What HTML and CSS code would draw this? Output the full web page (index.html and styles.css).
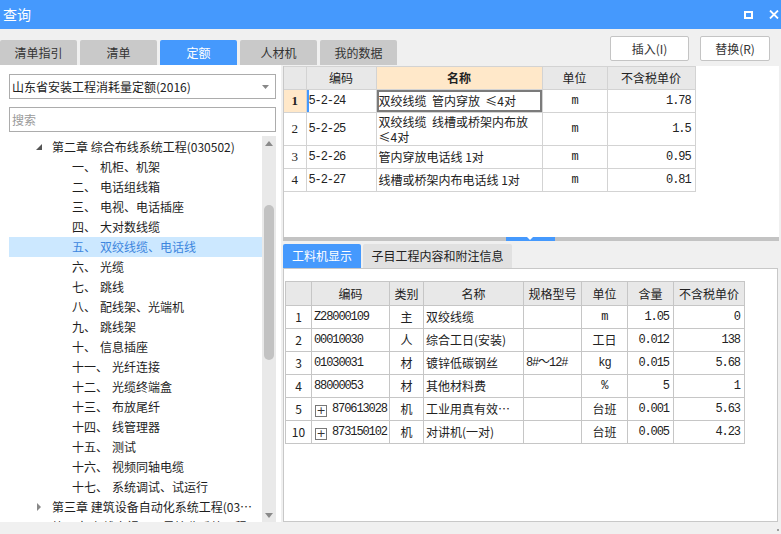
FILE: index.html
```html
<!DOCTYPE html>
<html lang="zh-CN">
<head>
<meta charset="utf-8">
<title>查询</title>
<link rel="stylesheet" href="styles.css">
</head>
<body>
<div class="titlebar">
  <span class="title">查询</span>
  <div class="win-btns">
    <svg width="9" height="8" viewBox="0 0 9 8"><rect x="1" y="1" width="7" height="6" fill="none" stroke="#fff" stroke-width="2"/></svg>
    <svg width="10" height="9" viewBox="0 0 10 9"><path d="M1 0.5 L9 8.5 M9 0.5 L1 8.5" stroke="#fff" stroke-width="1.8"/></svg>
  </div>
</div>

<div class="toolbar">
  <div class="tabs">
    <div class="tab">清单指引</div>
    <div class="tab">清单</div>
    <div class="tab active">定额</div>
    <div class="tab">人材机</div>
    <div class="tab">我的数据</div>
  </div>
  <div class="actions">
    <button class="btn btn-insert">插入(I)</button>
    <button class="btn btn-replace">替换(R)</button>
  </div>
</div>

<div class="main">
  <div class="left">
    <div class="combo">
      <span class="combo-text">山东省安装工程消耗量定额(2016)</span>
      <svg class="combo-arrow" width="7" height="4" viewBox="0 0 7 4"><path d="M0 0 L7 0 L3.5 4 Z" fill="#888"/></svg>
    </div>
    <div class="search">搜索</div>
    <div class="tree">
      <div class="tree-list">
        <div class="node lvl1"><svg class="tri" width="6" height="6" viewBox="0 0 6 6"><path d="M6 0 L6 6 L0 6 Z" fill="#555"/></svg><span class="label">第二章 综合布线系统工程(030502)</span></div>
        <div class="node lvl2"><span class="num">一、</span>机柜、机架</div>
        <div class="node lvl2"><span class="num">二、</span>电话组线箱</div>
        <div class="node lvl2"><span class="num">三、</span>电视、电话插座</div>
        <div class="node lvl2"><span class="num">四、</span>大对数线缆</div>
        <div class="node lvl2 selected"><span class="num">五、</span>双绞线缆、电话线</div>
        <div class="node lvl2"><span class="num">六、</span>光缆</div>
        <div class="node lvl2"><span class="num">七、</span>跳线</div>
        <div class="node lvl2"><span class="num">八、</span>配线架、光端机</div>
        <div class="node lvl2"><span class="num">九、</span>跳线架</div>
        <div class="node lvl2"><span class="num">十、</span>信息插座</div>
        <div class="node lvl2"><span class="num">十一、</span>光纤连接</div>
        <div class="node lvl2"><span class="num">十二、</span>光缆终端盒</div>
        <div class="node lvl2"><span class="num">十三、</span>布放尾纤</div>
        <div class="node lvl2"><span class="num">十四、</span>线管理器</div>
        <div class="node lvl2"><span class="num">十五、</span>测试</div>
        <div class="node lvl2"><span class="num">十六、</span>视频同轴电缆</div>
        <div class="node lvl2"><span class="num">十七、</span>系统调试、试运行</div>
        <div class="node lvl1"><svg class="tri" width="6" height="8" viewBox="0 0 6 8"><path d="M1 0 L5 4 L1 8 Z" fill="#888"/></svg><span class="label">第三章 建筑设备自动化系统工程(030503)</span></div>
        <div class="node lvl1"><svg class="tri" width="6" height="8" viewBox="0 0 6 8"><path d="M1 0 L5 4 L1 8 Z" fill="#888"/></svg><span class="label">第四章 有线电视、卫星接收系统工程</span></div>
      </div>
      <div class="vscroll">
        <div class="sb-btn"><svg width="8" height="5" viewBox="0 0 8 5"><path d="M0 5 L8 5 L4 0 Z" fill="#8a8a8a"/></svg></div>
        <div class="sb-thumb"></div>
        <div class="sb-fill"></div>
        <div class="sb-btn"><svg width="8" height="5" viewBox="0 0 8 5"><path d="M0 0 L8 0 L4 5 Z" fill="#8a8a8a"/></svg></div>
      </div>
    </div>
  </div>

  <div class="right">
    <div class="top-grid">
      <table class="grid grid-top">
        <colgroup><col style="width:22px"><col style="width:70px"><col style="width:166px"><col style="width:65px"><col style="width:88px"></colgroup>
        <tr class="hdr"><th class="rn"></th><th>编码</th><th class="sel-col">名称</th><th>单位</th><th>不含税单价</th></tr>
        <tr><td class="rn cur">1</td><td class="mono code cur-row">5-2-24</td><td class="name sel-cell">双绞线缆&nbsp; 管内穿放&nbsp; ≤4对</td><td class="mono ctr">m</td><td class="mono num">1.78</td></tr>
        <tr class="tall"><td class="rn">2</td><td class="mono code">5-2-25</td><td class="name wrap">双绞线缆&nbsp; 线槽或桥架内布放<br>≤4对</td><td class="mono ctr">m</td><td class="mono num">1.5</td></tr>
        <tr><td class="rn">3</td><td class="mono code">5-2-26</td><td class="name">管内穿放电话线 1对</td><td class="mono ctr">m</td><td class="mono num">0.95</td></tr>
        <tr><td class="rn">4</td><td class="mono code">5-2-27</td><td class="name">线槽或桥架内布电话线 1对</td><td class="mono ctr">m</td><td class="mono num">0.81</td></tr>
      </table>
    </div>
    <div class="splitter"><div class="split-handle"></div></div>
    <div class="btabs">
      <div class="btab active">工料机显示</div>
      <div class="btab">子目工程内容和附注信息</div>
    </div>
    <div class="bbox">
      <table class="grid grid-bottom">
        <colgroup><col style="width:26px"><col style="width:77px"><col style="width:34px"><col style="width:100px"><col style="width:58px"><col style="width:46px"><col style="width:46px"><col style="width:71px"></colgroup>
        <tr class="hdr"><th></th><th>编码</th><th>类别</th><th>名称</th><th>规格型号</th><th>单位</th><th>含量</th><th>不含税单价</th></tr>
        <tr><td class="ctr">1</td><td class="mono code">Z28000109</td><td class="ctr">主</td><td class="name">双绞线缆</td><td></td><td class="mono ctr">m</td><td class="mono num">1.05</td><td class="mono num">0</td></tr>
        <tr><td class="ctr">2</td><td class="mono code">00010030</td><td class="ctr">人</td><td class="name">综合工日(安装)</td><td></td><td class="ctr">工日</td><td class="mono num">0.012</td><td class="mono num">138</td></tr>
        <tr><td class="ctr">3</td><td class="mono code">01030031</td><td class="ctr">材</td><td class="name">镀锌低碳钢丝</td><td class="mono code">8#～12#</td><td class="mono ctr">kg</td><td class="mono num">0.015</td><td class="mono num">5.68</td></tr>
        <tr><td class="ctr">4</td><td class="mono code">88000053</td><td class="ctr">材</td><td class="name">其他材料费</td><td></td><td class="mono ctr">%</td><td class="mono num">5</td><td class="mono num">1</td></tr>
        <tr><td class="ctr">5</td><td class="mono code"><span class="plus">+</span>870613028</td><td class="ctr">机</td><td class="name"><span class="clip">工业用真有效值万用表</span></td><td></td><td class="ctr">台班</td><td class="mono num">0.001</td><td class="mono num">5.63</td></tr>
        <tr><td class="ctr">10</td><td class="mono code"><span class="plus">+</span>873150102</td><td class="ctr">机</td><td class="name">对讲机(一对)</td><td></td><td class="ctr">台班</td><td class="mono num">0.005</td><td class="mono num">4.23</td></tr>
      </table>
    </div>
  </div>
</div>
<div class="grip"></div>
</body>
</html>
```

FILE: styles.css
```css
* { box-sizing: border-box; }
html, body { margin: 0; padding: 0; }
body {
  width: 781px;
  height: 534px;
  overflow: hidden;
  background: #f0f0f0;
  font-family: "Noto Sans CJK SC", "Microsoft YaHei", sans-serif;
  font-size: 12px;
  color: #222;
  position: relative;
}

/* title bar */
.titlebar {
  height: 29px;
  background: #4599fd;
  color: #fff;
  display: flex;
  align-items: center;
  padding-left: 3px;
}
.title { flex: 1; font-size: 14px; line-height: 29px; }
.win-btns { display: flex; align-items: center; gap: 16px; margin-right: 2px; }
.win-btns svg { display: block; }

/* toolbar */
.toolbar {
  height: 36px;
  display: flex;
  justify-content: space-between;
}
.tabs { display: flex; gap: 3px; align-self: flex-end; }
.tab {
  width: 77px;
  height: 25px;
  line-height: 25px;
  text-align: center;
  background: #c9c9c9;
  color: #333;
  border-radius: 2px 2px 0 0;
}
.tab.active { background: #4599fd; color: #fff; }
.actions { display: flex; gap: 11px; margin-top: 7px; margin-right: 11px; height: 25px; }
.btn {
  height: 25px;
  padding: 0;
  border: 1px solid #c4c4c4;
  border-radius: 2px;
  background: #fff;
  font-family: inherit;
  font-size: 12px;
  color: #333;
}
.btn-insert { width: 79px; }
.btn-replace { width: 70px; }

/* main */
.main { display: flex; height: 457px; }

.left {
  width: 281px;
  background: #fff;
  padding: 9px 5px 0 9px;
  display: flex;
  flex-direction: column;
}
.combo {
  height: 25px;
  border: 1px solid #acacac;
  display: flex;
  align-items: center;
  padding: 0 6px 0 2px;
}
.combo-text { flex: 1; color: #222; }
.combo-arrow { display: block; }
.search {
  margin-top: 8px;
  height: 25px;
  border: 1px solid #acacac;
  line-height: 23px;
  padding-left: 2px;
  color: #9a9a9a;
}
.tree {
  margin-top: 4px;
  flex: 1;
  display: flex;
  min-height: 0;
}
.tree-list { flex: 1; overflow: hidden; padding-top: 1px; }
.node {
  height: 20px;
  line-height: 20px;
  white-space: nowrap;
  display: flex;
  align-items: center;
  color: #1e1e1e;
}
.node.lvl1 { padding-left: 27px; }
.node.lvl2 { padding-left: 63px; }
.tri { display: block; margin-right: 10px; flex: none; }
.label { overflow: hidden; text-overflow: ellipsis; max-width: 206px; }
.num { margin-right: 4px; }
.node.selected { background: #cce8ff; color: #3d86de; }

.vscroll {
  width: 14px;
  background: #e9e9e9;
  display: flex;
  flex-direction: column;
  align-items: center;
}
.sb-btn { height: 14px; display: flex; align-items: center; justify-content: center; }
.sb-btn svg { display: block; }
.sb-thumb {
  margin-top: 55px;
  width: 10px;
  height: 155px;
  border-radius: 5px;
  background: #c2c2c2;
}
.sb-fill { flex: 1; }

/* right */
.right {
  margin-left: 2px;
  width: 496px;
  display: flex;
  flex-direction: column;
}
.top-grid {
  margin-top: 1px;
  height: 171px;
  background: #fff;
  border-left: 1px solid #c8c8c8;
}

.grid { border-collapse: collapse; table-layout: fixed; }
.grid th, .grid td {
  border: 1px solid #d3d3d3;
  padding: 0 2px;
  height: 23px;
  line-height: 16px;
  font-weight: normal;
  white-space: nowrap;
  overflow: hidden;
  text-align: left;
}
.grid th { background: #e8e8e8; text-align: center; color: #222; }
.grid-top tr > :first-child { border-left: 0; }
.grid-top .rn { text-align: center; font-family: "Liberation Serif", serif; font-size: 13px; padding: 0; }
.grid-top td.rn.cur { background: #ffe8c9; font-weight: bold; }
.grid-top th.sel-col { background: #ffe8c9; font-weight: bold; }
.grid-top tr.tall td { height: 33px; }
.grid td.wrap { white-space: normal; line-height: 15px; }
.cur-row { box-shadow: inset 2px 0 0 #4599fd; }
.sel-cell { box-shadow: inset 0 0 0 2px #7b7b7b; }

.mono {
  font-family: "Liberation Mono", monospace;
  font-size: 12px;
  letter-spacing: -1.1px;
}
.grid .ctr { text-align: center; }
.grid .num { text-align: right; padding-right: 4px; }
.grid .code { padding-left: 2px; }
.grid .name { padding-left: 2px; }

.splitter { height: 4px; background: #c3c3c3; display: flex; }
.split-handle {
  margin-left: 223px;
  width: 49px;
  height: 4px;
  background: #4599fd;
  position: relative;
}
.split-handle::after {
  content: "";
  position: absolute;
  left: 21px;
  top: 0;
  border-left: 3px solid transparent;
  border-right: 3px solid transparent;
  border-top: 3px solid #fff;
}

.btabs { margin-top: 3px; display: flex; gap: 2px; height: 24px; }
.btab {
  height: 24px;
  line-height: 24px;
  background: #e1e1e1;
  color: #222;
  border-radius: 2px 2px 0 0;
  text-align: center;
  width: 149px;
}
.btab.active { background: #4599fd; color: #fff; width: 78px; }

.bbox {
  width: 495px;
  height: 254px;
  background: #fff;
  border: 1px solid #c8c8c8;
  padding: 12px 0 0 1px;
}
.grid-bottom th, .grid-bottom td { border-color: #c6c6c6; }
.grid-bottom th { height: 24px; }
.plus {
  display: inline-block;
  width: 12px;
  height: 12px;
  border: 1px solid #777;
  line-height: 9px;
  text-align: center;
  font-family: "DejaVu Sans", sans-serif;
  font-size: 11px;
  letter-spacing: 0;
  vertical-align: -2px;
  margin: 0 5px 0 1px;
  color: #333;
}
.clip {
  display: inline-block;
  max-width: 88px;
  overflow: hidden;
  text-overflow: ellipsis;
  vertical-align: top;
}
.grip {
  position: absolute;
  right: 2px;
  bottom: 3px;
  width: 2px;
  height: 2px;
  background: #a0a0a0;
}
```
